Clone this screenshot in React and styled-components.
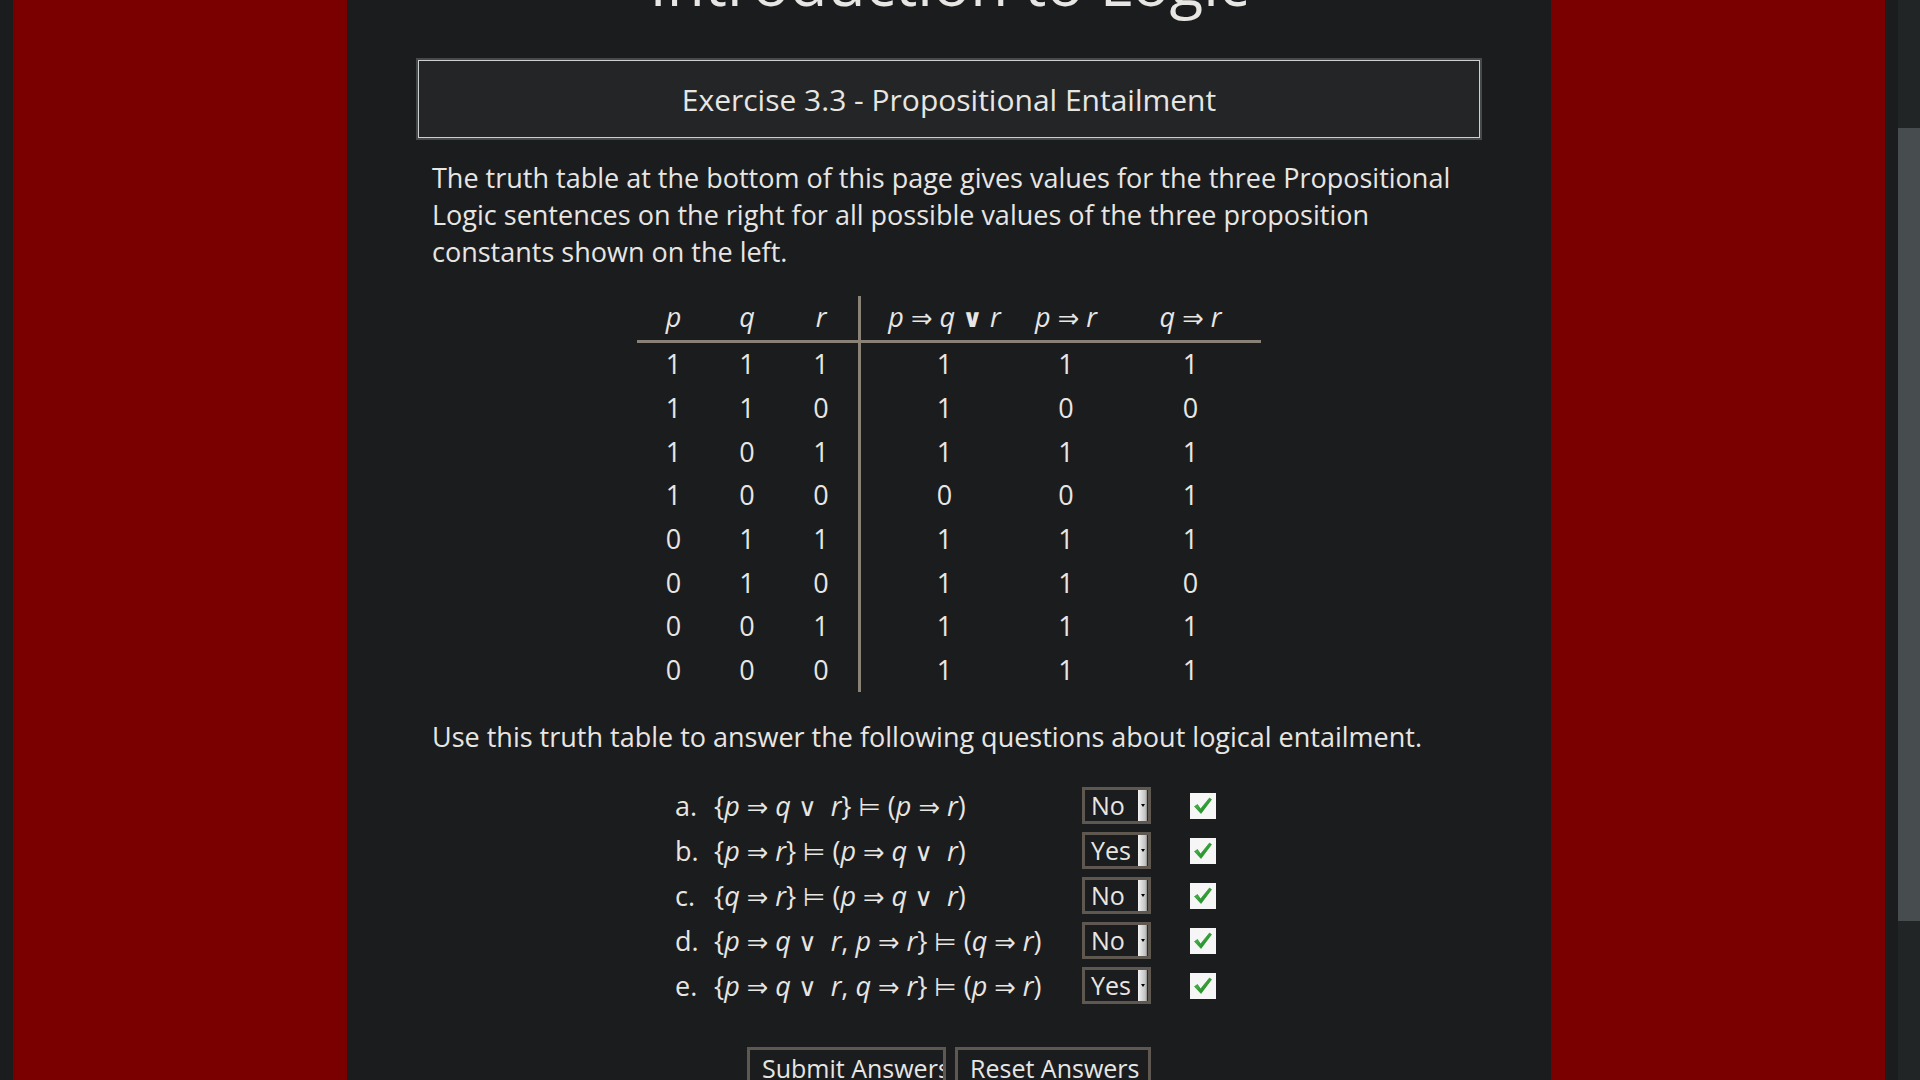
import React, { useLayoutEffect, useRef } from "react";
import styled, { createGlobalStyle } from "styled-components";

const GlobalStyle = createGlobalStyle`
	* {
		box-sizing: border-box;
	}
	html,
	body {
		margin: 0;
		padding: 0;
		height: 100%;
		overflow: hidden;
		background: #1b1c1e;
	}
	body {
		font-family: "Open Sans", "DejaVu Sans", sans-serif;
		color: #e8e6e3;
	}
`;

const Frame = styled.div`
	display: flex;
	height: 100vh;
`;

const Viewport = styled.div`
	flex: 1;
	overflow: hidden;
	background: #1b1c1e;
`;

const ScrollTrack = styled.div`
	width: 22px;
	background: #222526;
	padding-top: 128px;
`;

const ScrollThumb = styled.div`
	height: 793px;
	background: #474c4e;
`;

const Page = styled.div`
	display: grid;
	grid-template-columns: 334px 1fr 334px;
	margin: 0 13px;
`;

const Band = styled.div`
	background: #7a0000;
`;

const Main = styled.main`
	display: flex;
	flex-direction: column;
	padding: 119px 0 200px;
`;

const Title = styled.h1`
	margin: 0 0 41px;
	font-size: 62px;
	line-height: 1.2;
	font-weight: 400;
	text-align: center;
`;

const ExerciseBox = styled.div`
	margin: 0 71px;
	height: 78px;
	display: flex;
	align-items: center;
	justify-content: center;
	border: 1px solid #cfcfcf;
	box-shadow: 0 0 0 2px #454a4d;
	background: #232527;
	font-size: 30px;
`;

const Text = styled.p`
	margin: ${(p) => p.$top}px 60px 0 85px;
	font-size: 27px;
	line-height: 1.36;
`;

const TruthTable = styled.table`
	margin: 25px auto 0;
	width: 624px;
	table-layout: fixed;
	border-collapse: separate;
	border-spacing: 0;
	font-size: 27px;
	line-height: 1.36;
`;

const HeadCell = styled.th`
	width: ${(p) => p.$w}px;
	padding: 3.6px 0 3.6px ${(p) => p.$pl || 0}px;
	font-weight: 400;
	text-align: center;
	white-space: nowrap;
	border-bottom: 3px solid #8a8276;
	border-right: ${(p) => (p.$divider ? "3px solid #8a8276" : "none")};
`;

const Cell = styled.td`
	padding: 3.5px 0 3.5px ${(p) => p.$pl || 0}px;
	text-align: center;
	border-right: ${(p) => (p.$divider ? "3px solid #8a8276" : "none")};
`;

const Var = styled.i`
	font-style: italic;
`;

const Op = styled.span`
	font-family: "DejaVu Sans", sans-serif;
	font-size: 0.95em;
	font-weight: ${(p) => (p.$bold ? 700 : 400)};
`;

const QuestionList = styled.ol`
	list-style: none;
	margin: 31px 0 0 328px;
	padding: 0;
	display: flex;
	flex-direction: column;
	gap: 8px;
`;

const QuestionRow = styled.li`
	display: flex;
	align-items: center;
	height: 37px;
	font-size: 27px;
`;

const Letter = styled.span`
	width: 39px;
`;

const Formula = styled.span`
	width: 368px;
	white-space: pre;
`;

const SelectBox = styled.div`
	width: 69px;
	height: 37px;
	display: flex;
	border: 3px solid #5f5851;
	background: #1b1c1e;
`;

const SelectValue = styled.span`
	flex: 1;
	padding-left: 6px;
	font-size: 25px;
	line-height: 31px;
`;

const SelectArrow = styled.span`
	width: 10px;
	display: flex;
	align-items: center;
	justify-content: center;
	background: linear-gradient(90deg, #f4f4f4 0%, #dadada 40%, #c4c4c4 80%, #8c8c8c 100%);
	border-right: 1px solid #2a2a2a;

	&::after {
		content: "";
		border-left: 2px solid transparent;
		border-right: 2px solid transparent;
		border-top: 3px solid #000;
	}
`;

const CheckWrap = styled.span`
	margin-left: 39px;
	display: flex;
`;

const ButtonRow = styled.div`
	display: flex;
	justify-content: center;
	gap: 9px;
	margin-top: 43px;
`;

const Button = styled.button`
	width: ${(p) => p.$w}px;
	height: 48px;
	padding: 0 12px 7px;
	border: 3px solid #5f5851;
	background: #1b1c1e;
	color: #e8e6e3;
	font-family: "Open Sans", "DejaVu Sans", sans-serif;
	font-size: 25px;
	text-align: left;
	white-space: nowrap;
	overflow: hidden;
`;

const rows = [
	[1, 1, 1, 1, 1, 1],
	[1, 1, 0, 1, 0, 0],
	[1, 0, 1, 1, 1, 1],
	[1, 0, 0, 0, 0, 1],
	[0, 1, 1, 1, 1, 1],
	[0, 1, 0, 1, 1, 0],
	[0, 0, 1, 1, 1, 1],
	[0, 0, 0, 1, 1, 1],
];

const widths = [73, 74, 77, 167, 76, 157];

const questions = [
	{ id: "a", text: "{p ⇒ q ∨  r} ⊨ (p ⇒ r)", answer: "No" },
	{ id: "b", text: "{p ⇒ r} ⊨ (p ⇒ q ∨  r)", answer: "Yes" },
	{ id: "c", text: "{q ⇒ r} ⊨ (p ⇒ q ∨  r)", answer: "No" },
	{ id: "d", text: "{p ⇒ q ∨  r, p ⇒ r} ⊨ (q ⇒ r)", answer: "No" },
	{ id: "e", text: "{p ⇒ q ∨  r, q ⇒ r} ⊨ (p ⇒ r)", answer: "Yes" },
];

const renderFormula = (s, boldOr) =>
	s.split("").map((ch, i) => {
		if (/[pqr]/.test(ch)) return <Var key={i}>{ch}</Var>;
		if ("⇒∨⊨".includes(ch))
			return (
				<Op key={i} $bold={boldOr && ch === "∨"}>
					{ch}
				</Op>
			);
		return ch;
	});

const CheckMark = () => (
	<svg width="26" height="26" viewBox="0 0 26 26">
		<defs>
			<linearGradient id="chk" x1="0" y1="0" x2="1" y2="1">
				<stop offset="0" stopColor="#5cc85c" />
				<stop offset="1" stopColor="#0d7a12" />
			</linearGradient>
		</defs>
		<rect x="0" y="0" width="26" height="26" fill="#f6f6f6" />
		<path
			d="M4.5 13.5 L7.5 11.5 L10.5 16 L19.5 5 L21.5 6.5 L11 20.5 Z"
			fill="url(#chk)"
			stroke="#1b8a22"
			strokeWidth="0.6"
		/>
	</svg>
);

const App = () => {
	const viewRef = useRef(null);
	useLayoutEffect(() => {
		if (viewRef.current) viewRef.current.scrollTop = 174;
	}, []);

	const headers = ["p", "q", "r", "p ⇒ q ∨ r", "p ⇒ r", "q ⇒ r"];

	return (
		<>
			<GlobalStyle />
			<Frame>
				<Viewport ref={viewRef}>
					<Page>
						<Band />
						<Main>
							<Title>Introduction to Logic</Title>
							<ExerciseBox>Exercise 3.3 - Propositional Entailment</ExerciseBox>
							<Text $top={22}>
								The truth table at the bottom of this page gives values for the
								three Propositional Logic sentences on the right for all
								possible values of the three proposition constants shown on the
								left.
							</Text>
							<TruthTable>
								<thead>
									<tr>
										{headers.map((h, i) => (
											<HeadCell
												key={h}
												$w={widths[i]}
												$divider={i === 2}
												$pl={i === 5 ? 16 : 0}
											>
												{renderFormula(h, true)}
											</HeadCell>
										))}
									</tr>
								</thead>
								<tbody>
									{rows.map((row, r) => (
										<tr key={r}>
											{row.map((v, i) => (
												<Cell key={i} $divider={i === 2} $pl={i === 5 ? 16 : 0}>
													{v}
												</Cell>
											))}
										</tr>
									))}
								</tbody>
							</TruthTable>
							<Text $top={27}>
								Use this truth table to answer the following questions about
								logical entailment.
							</Text>
							<QuestionList>
								{questions.map((q) => (
									<QuestionRow key={q.id}>
										<Letter>{q.id}.</Letter>
										<Formula>{renderFormula(q.text)}</Formula>
										<SelectBox>
											<SelectValue>{q.answer}</SelectValue>
											<SelectArrow />
										</SelectBox>
										<CheckWrap>
											<CheckMark />
										</CheckWrap>
									</QuestionRow>
								))}
							</QuestionList>
							<ButtonRow>
								<Button $w={199}>Submit Answers</Button>
								<Button $w={196}>Reset Answers</Button>
							</ButtonRow>
						</Main>
						<Band />
					</Page>
				</Viewport>
				<ScrollTrack>
					<ScrollThumb />
				</ScrollTrack>
			</Frame>
		</>
	);
};

export default App;
